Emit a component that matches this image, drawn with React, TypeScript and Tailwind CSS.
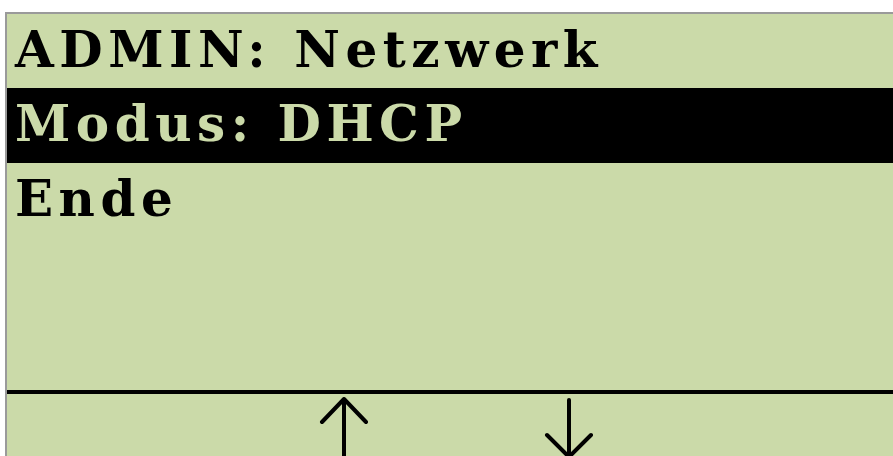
const rows = [
  { label: "ADMIN: Netzwerk", selected: false, height: "h-[74px]" },
  { label: "Modus: DHCP", selected: true, height: "h-[75px]" },
  { label: "Ende", selected: false, height: "h-[75px]" },
];

function ArrowUp() {
  return (
    <svg width="52" height="70" viewBox="0 0 52 70" className="shrink-0 overflow-visible">
      <path d="M26 5 L26 70 M4 28 L26 5 L48 28" fill="none" stroke="#000" strokeWidth="4" strokeLinecap="round" strokeLinejoin="round" />
    </svg>
  );
}

function ArrowDown() {
  return (
    <svg width="52" height="70" viewBox="0 0 52 70" className="shrink-0 overflow-visible">
      <path d="M26 6 L26 63 M4 41 L26 63 L48 41" fill="none" stroke="#000" strokeWidth="4" strokeLinecap="round" strokeLinejoin="round" />
    </svg>
  );
}

export default function App() {
  return (
    <div className="w-[893px] h-[456px] overflow-hidden bg-white pt-[12px] pl-[5px]">
      <div className="w-[900px] h-[460px] flex flex-col bg-[#cbdaa9] border-l-2 border-t-2 border-[#9a9a9a]">
        {/* Menüzeilen */}
        {rows.map((row) => (
          <div
            key={row.label}
            className={
              (row.selected ? "bg-black text-[#cbdaa9] " : "text-black ") +
              row.height +
              " flex items-center pl-[8px] pb-[3px]"
            }
          >
            <span className="font-['DejaVu_Serif',serif] font-bold text-[50px] leading-none tracking-[5.5px] whitespace-pre">
              {row.label}
            </span>
          </div>
        ))}

        <div className="h-[152px]" />
        <div className="h-[4px] bg-black" />

        {/* Pfeiltasten */}
        <div className="flex items-start pl-[311px] gap-[173px]">
          <ArrowUp />
          <ArrowDown />
        </div>
      </div>
    </div>
  );
}
